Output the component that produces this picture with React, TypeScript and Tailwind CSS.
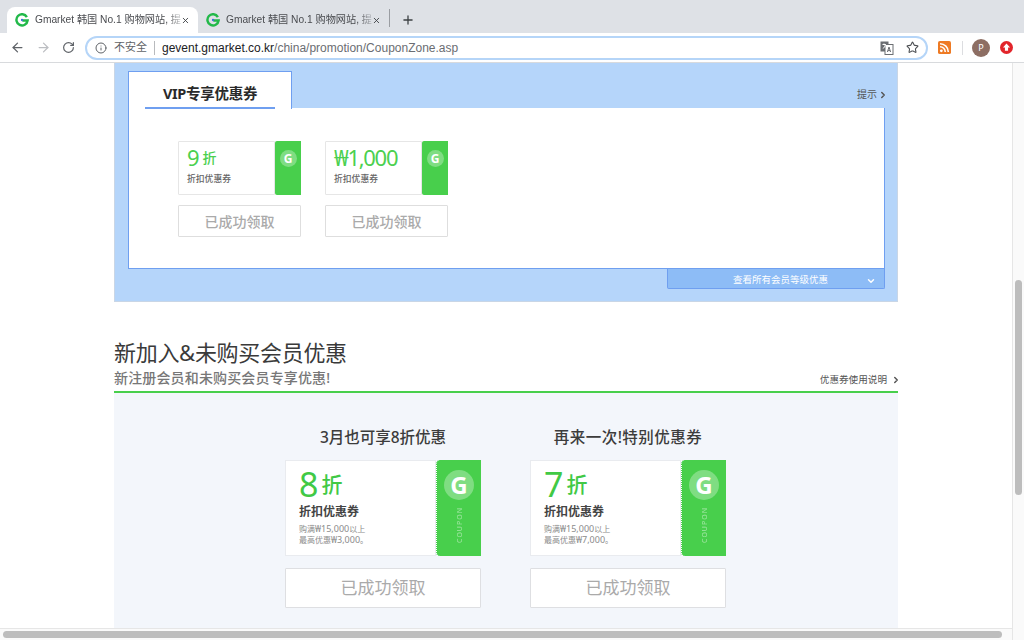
import { ReactNode } from 'react'
import { ArrowLeft, ArrowRight, ChevronDown, ChevronRight, Info, Plus, RotateCw, Star, X } from 'lucide-react'

const cjk = "font-['Noto_Sans','Noto_Sans_CJK_SC',sans-serif]"

const Favicon = () => (
    <svg viewBox="0 0 16 16" className="size-[14px] shrink-0">
        <path
            d="M13.6 4.6A6.4 6.4 0 1 0 14.4 8.6H8.4"
            fill="none"
            stroke="#22b94a"
            strokeWidth="2.8"
        />
        <circle cx="8" cy="8" r="1.3" fill="#3b6fd8" />
    </svg>
)

const Tab = ({ active }: { active?: boolean }) => (
    <div
        className={`relative flex h-[26px] w-[191px] items-center rounded-t-[8px] pl-[8px] pr-[8px] ${active ? 'bg-white' : ''}`}
    >
        <Favicon />
        <span className="ml-[6px] whitespace-nowrap font-['Liberation_Sans','Noto_Sans_CJK_SC',sans-serif] text-[10.2px] text-[#4a4c50] [mask-image:linear-gradient(to_right,black_90%,rgba(0,0,0,0.25))]">
            Gmarket 韩国 No.1 购物网站, 提
        </span>
        <X className="ml-auto size-[11px] text-[#3c4043]" strokeWidth={2.4} />
    </div>
)

const Translate = () => (
    <svg viewBox="0 0 14 14" className="size-[14px]">
        <rect x="0.5" y="0.5" width="8" height="10" fill="#6b6e72" />
        <rect x="5" y="3.5" width="8" height="10" fill="#fff" stroke="#6b6e72" />
        <path d="M2.5 3.5h3.4M4 2.5v1M2.8 7.5c1.4-.6 2.2-2 2.5-3.6" stroke="#fff" fill="none" />
        <path d="M7.4 11l1.6-5 1.6 5M8 9.6h2" stroke="#6b6e72" fill="none" />
    </svg>
)

const Rss = () => (
    <svg viewBox="0 0 14 14" className="size-[13px]">
        <rect width="14" height="14" rx="2" fill="#ee7a24" />
        <circle cx="3.6" cy="10.6" r="1.5" fill="#fff" />
        <path d="M2.2 6.2a5.6 5.6 0 0 1 5.6 5.6M2.2 2.9a8.9 8.9 0 0 1 8.9 8.9" stroke="#fff" strokeWidth="1.7" fill="none" />
    </svg>
)

const UpBadge = () => (
    <svg viewBox="0 0 14 14" className="size-[13px]">
        <circle cx="7" cy="7" r="7" fill="#e2252b" />
        <path d="M7 2.8L10.8 7H8.7v3.6H5.3V7H3.2z" fill="#fff" />
    </svg>
)

const SmallCoupon = ({ value, wide }: { value: string; wide?: boolean }) => (
    <div className="flex w-[123px] flex-col">
        <div className="flex h-[54px]">
            <div className="flex w-[97px] flex-col rounded-l-[1px] border border-[#e6e6e6] bg-white pl-[8px]">
                <div className="mt-[3px] flex h-[25px] items-center text-[22px] leading-[25px] text-[#4bd04f]">
                    <span className={wide ? 'tracking-[-1.3px]' : ''}>{value}</span>
                    {!wide && <span className="ml-[3px] text-[14px] font-medium">折</span>}
                </div>
                <span className="mt-[3px] text-[8.8px] font-medium leading-[12px] text-[#666]">折扣优惠券</span>
            </div>
            <div className="flex w-[26px] justify-center rounded-l-[2px] bg-[#48cf4c] pt-[9px]">
                <span className="flex size-[17px] items-center justify-center rounded-full bg-white/30 text-[12px] font-bold leading-none text-white">
                    G
                </span>
            </div>
        </div>
        <button className="mt-[10px] h-[32px] rounded-[1px] border border-[#dedede] bg-white text-[14px] font-medium text-[#aaaaaa]">
            已成功领取
        </button>
    </div>
)

const BigCoupon = ({
    title,
    titleClass,
    value,
    line1,
    line2,
}: {
    title: string
    titleClass?: string
    value: string
    line1: ReactNode
    line2: ReactNode
}) => (
    <div className="flex w-[196px] flex-col">
        <div className={`mb-[14px] h-[18px] whitespace-nowrap text-center text-[15.5px] font-medium leading-[18px] text-[#3c3c3c] ${titleClass ?? ''}`}>
            {title}
        </div>
        <div className="flex h-[96px]">
            <div className="flex w-[151px] flex-col border border-[#e9ebef] bg-white pl-[13px]">
                <div className="mt-[3px] flex h-[40px] items-center text-[34px] leading-[40px] text-[#41c945]">
                    {value}
                    <span className="ml-[3px] text-[21px] font-medium leading-none">折</span>
                </div>
                <span className="text-[12px] font-bold leading-[16px] text-[#444]">折扣优惠券</span>
                <span className="mt-[3px] text-[8px] leading-[11px] text-[#8b8b8b]">{line1}</span>
                <span className="text-[8px] leading-[11px] text-[#8b8b8b]">{line2}</span>
            </div>
            <div className="flex w-[45px] flex-col items-center rounded-l-[4px] border-l border-dotted border-white bg-[#48cf4c] pt-[10px]">
                <span className="flex size-[30px] items-center justify-center rounded-full bg-white/30 text-[24px] font-bold leading-none text-white">
                    G
                </span>
                <span className="mt-[7px] rotate-180 text-[7px] leading-none tracking-[1px] text-white/50 [writing-mode:vertical-rl]">
                    COUPON
                </span>
            </div>
        </div>
        <button className="mt-[12px] h-[40px] rounded-[1px] border border-[#dedfe2] bg-white text-[17px] text-[#aaaaaa]">
            已成功领取
        </button>
    </div>
)

const Won = ({ children }: { children: string }) => <span className="text-[9px]">{children}</span>

const App = () => {
    return (
        <div className={`flex h-[640px] w-[1024px] flex-col overflow-hidden bg-white ${cjk}`}>
            {/* browser chrome */}
            <div className="flex h-[33px] shrink-0 items-end bg-[#dee1e6] pl-[7px]">
                <Tab active />
                <Tab />
                <div className="mb-[6px] h-[18px] w-px bg-[#9a9da2]" />
                <Plus className="mb-[6px] ml-[11px] size-[14px] text-[#3c4043]" strokeWidth={2.2} />
            </div>
            <div className="flex h-[30px] shrink-0 items-center border-b border-[#d8dadd] bg-white pl-[10px]">
                <ArrowLeft className="size-[15px] text-[#5f6368]" />
                <ArrowRight className="ml-[11px] size-[15px] text-[#bcbec2]" />
                <RotateCw className="ml-[11px] size-[13px] text-[#5f6368]" strokeWidth={2.2} />
                <div className="ml-[10px] flex h-[24px] w-[843px] items-center rounded-full border-2 border-[#b5d5f8] pl-[8px] pr-[7px]">
                    <Info className="size-[12px] text-[#5f6368]" />
                    <span className="ml-[7px] text-[11px] text-[#5f6368]">不安全</span>
                    <div className="ml-[7px] h-[14px] w-px bg-[#b8babd]" />
                    <span className="ml-[7px] whitespace-nowrap font-['Liberation_Sans',sans-serif] text-[12px] text-[#202124]">
                        gevent.gmarket.co.kr<span className="text-[#6a6d72]">/china/promotion/CouponZone.asp</span>
                    </span>
                    <div className="ml-auto flex items-center gap-[12px]">
                        <Translate />
                        <Star className="size-[13px] text-[#4c4f53]" strokeWidth={2} />
                    </div>
                </div>
                <div className="ml-[10px]">
                    <Rss />
                </div>
                <div className="ml-[11px] h-[14px] w-px bg-[#dcdde0]" />
                <div className="ml-[9px] flex size-[18px] items-center justify-center rounded-full bg-[#8d6e63] text-[9px] text-white">
                    P
                </div>
                <div className="ml-[10px]">
                    <UpBadge />
                </div>
            </div>

            <div className="flex min-h-0 flex-1">
                <div className="flex w-[1012px] flex-col">
                    <div className="flex min-h-0 flex-1 justify-center overflow-hidden">
                        <div className="flex w-[784px] flex-col">
                            {/* VIP block */}
                            <div className="h-[239px] shrink-0 border-x border-b border-[#c9d6e6] bg-[#b5d5fa] pl-[13px] pr-[12px] pt-[8px]">
                                <div className="flex h-[37px] items-start justify-between">
                                    <div className="h-[38px] w-[164px] border border-b-0 border-[#6f9ff0] bg-white px-[16px]">
                                        <div className="flex h-[37px] items-center justify-center border-b-2 border-[#6f9ff0] pt-[9px] text-[14.5px] font-bold tracking-[-0.3px] text-[#2a2a2a]">
                                            VIP专享优惠券
                                        </div>
                                    </div>
                                    <div className="mt-[16px] flex items-center text-[10px] text-[#555]">
                                        提示
                                        <ChevronRight className="-mr-[3px] ml-[1px] size-[10px]" strokeWidth={3.5} />
                                    </div>
                                </div>
                                <div className="flex h-[161px] gap-[24px] border border-t-0 border-[#6f9ff0] bg-white pl-[49px] pt-[33px]">
                                    <SmallCoupon value="9" />
                                    <SmallCoupon value="₩1,000" wide />
                                </div>
                                <div className="ml-auto flex h-[20px] w-[218px] items-center rounded-b-[2px] border border-t-0 border-[#6f9ff0] bg-[#8dbcf6] pt-[4px] text-[9.5px] text-white">
                                    <span className="ml-[65px]">查看所有会员等级优惠</span>
                                    <ChevronDown className="ml-auto mr-[8px] size-[10px]" strokeWidth={3.5} />
                                </div>
                            </div>

                            {/* new member block */}
                            <div className="mt-[37px] flex h-[26px] shrink-0 items-center text-[22px] leading-[26px] tracking-[-0.3px] text-[#3a3a3a]">
                                新加入&未购买会员优惠
                            </div>
                            <div className="flex h-[28px] shrink-0 items-start justify-between border-b-2 border-[#48cf4c] pt-[3px]">
                                <span className="text-[14px] font-medium leading-[20px] tracking-[0.15px] text-[#777]">
                                    新注册会员和未购买会员专享优惠!
                                </span>
                                <span className="mt-[5px] flex items-center text-[9.6px] text-[#555]">
                                    优惠券使用说明
                                    <ChevronRight className="-mr-[3px] ml-[4px] size-[10px]" strokeWidth={3.5} />
                                </span>
                            </div>
                            <div className="flex min-h-0 flex-1 gap-[49px] bg-[#f3f6fb] pl-[171px] pt-[35px]">
                                <BigCoupon
                                    title="3月也可享8折优惠"
                                    value="8"
                                    line1={<>购满<Won>₩15,000</Won>以上</>}
                                    line2={<>最高优惠<Won>₩3,000</Won>。</>}
                                />
                                <BigCoupon
                                    title="再来一次!特别优惠券"
                                    titleClass="tracking-[0.5px]"
                                    value="7"
                                    line1={<>购满<Won>₩15,000</Won>以上</>}
                                    line2={<>最高优惠<Won>₩7,000</Won>。</>}
                                />
                            </div>
                        </div>
                    </div>
                    {/* horizontal scrollbar */}
                    <div className="flex h-[12px] shrink-0 items-center border-t border-[#e6e6e6] bg-[#fafafa] pl-[3px]">
                        <div className="h-[7px] w-[999px] rounded-full bg-[#bdbdbd]" />
                    </div>
                </div>
                {/* vertical scrollbar */}
                <div className="h-full w-[12px] shrink-0 border-l border-[#e6e6e6] bg-[#fafafa] pl-[2px] pt-[217px]">
                    <div className="h-[215px] w-[7px] rounded-full bg-[#bdbdbd]" />
                </div>
            </div>
        </div>
    )
}

export default App
